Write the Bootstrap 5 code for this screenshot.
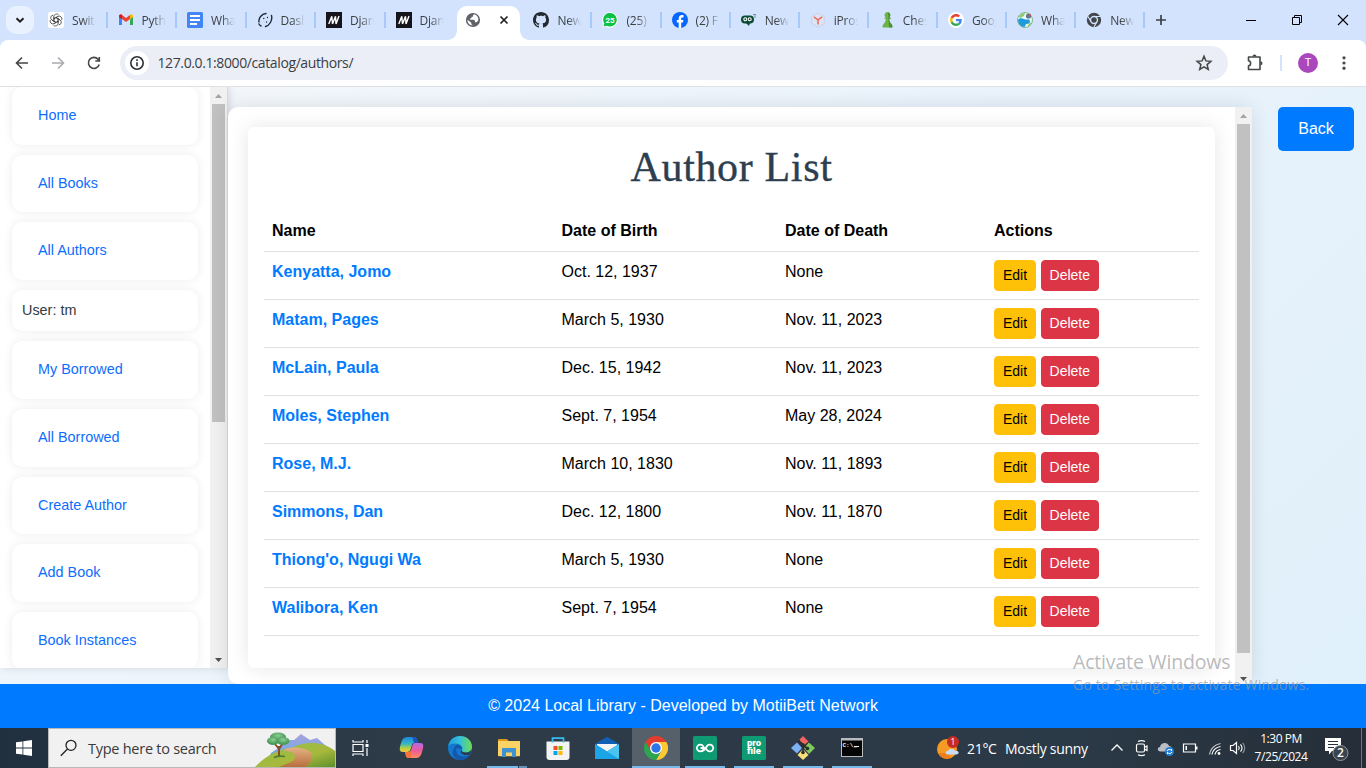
<!DOCTYPE html>
<html lang="en">
<head>
<meta charset="utf-8">
<meta name="viewport" content="width=device-width, initial-scale=1">
<title>Local Library - Author List</title>
<link href="https://cdn.jsdelivr.net/npm/bootstrap@5.3.0/dist/css/bootstrap.min.css" rel="stylesheet">
<style>
:root { --ui: "Open Sans", "Noto Sans", sans-serif; --page: "Liberation Sans", Arial, sans-serif; }
body { width: 1366px; height: 768px; overflow: hidden; font-family: var(--page); color: #000; }
svg { display: block; flex: none; }

/* browser tab strip */
.tabstrip { height: 40px; background: #d3e3fd; font-family: var(--ui); font-size: 12px; color: #3c4043; }
.tab-search { width: 28px; height: 28px; margin: 6px 5px 6px 6px; border-radius: 10px; background: #e9f0fe; }
.btab { width: 69.5px; padding-left: 9px; border-right: 0; }
.btab.later { width: 69.1px; }
.btab .label { width: 24px; margin: 2px 0 0 8px; letter-spacing: -.2px; overflow: hidden; white-space: nowrap; line-height: 16px;
  -webkit-mask-image: linear-gradient(90deg, #000 45%, transparent 100%); mask-image: linear-gradient(90deg, #000 45%, transparent 100%); }
.btab::after { content: ""; width: 2px; height: 16px; margin-left: auto; margin-right: 1px; background: #a8c7fa; }
.btab.bare::after { display: none; }
.btab-active { width: 63px; height: 34px; margin: 6px 4.4px 0 1px; padding-left: 8px; background: #fff; border-radius: 10px 10px 0 0; position: relative; }
.btab-active::before, .btab-active::after { content: ""; position: absolute; bottom: 0; width: 9px; height: 9px; }
.btab-active::before { left: -9px; background: radial-gradient(circle at 0 0, transparent 8.5px, #fff 9px); }
.btab-active::after { right: -9px; background: radial-gradient(circle at 100% 0, transparent 8.5px, #fff 9px); }

/* address bar */
.toolbar-wrap { height: 47px; background: #d3e3fd; }
.toolbar { height: 47px; background: #fff; border-radius: 8px 8px 0 0; border-bottom: 1px solid #dfe1e2; padding-left: 12px; }
.omnibox { width: 1108px; height: 34px; margin-left: 16px; background: #ebeef7; border-radius: 17px; padding: 0 15px 0 5px; font-family: var(--ui); font-size: 14px; color: #3b3e44; letter-spacing: -.39px; }
.omnibox .url { margin-top: -2px; }
.site-info { width: 24px; height: 24px; border-radius: 50%; background: #fff; margin-right: 8.5px; }
.avatar { width: 20px; height: 20px; border-radius: 50%; background: #ab47bc; color: #fff; font: 11px/20px Roboto, sans-serif; text-align: center; }

/* page */
.page { height: 597px; background: linear-gradient(135deg, #f6f8fb 0%, #eaf3fc 50%, #e0f0fa 100%); overflow: hidden; }
.sidebar { width: 228px; height: 581px; background: #fff; border-right: 1px solid #d8d9da; box-shadow: 2px 0 8px rgba(0,0,0,.12); overflow: hidden; }
.side-list { width: 186px; margin: 0 12px; display: flex; flex-direction: column; gap: 10px; }
.side-item { font-size: 14.4px; line-height: 21.6px; padding: 18px 26px; border-radius: 10px; background: #fff; box-shadow: 0 0 10px rgba(0,0,0,.08); color: #0d6efd; text-decoration: none; flex: none; }
.side-item.user { padding: 10px; color: #343a40; }
.sbar { width: 17px; background: #f1f1f1; flex: none; display: flex; flex-direction: column; align-items: center; }
.sbar .thumb { width: 13px; background: #c1c1c1; }
.sbar .btn-cell { height: 17px; width: 17px; display: grid; place-items: center; }
.main-pane { width: 1024px; height: 577px; margin-top: 20px; background: #fff; border-radius: 10px; box-shadow: 0 0 20px rgba(0,0,0,.11); }
.author-card { width: 967px; height: 541px; margin: 20px 20px 0; padding: 16px; border-radius: 6px; background: #fff; box-shadow: 0 0 20px rgba(0,0,0,.1); flex: none; }
.title { font-family: "Liberation Serif", Georgia, serif; font-size: 42px; line-height: 48px; height: 48px; letter-spacing: .65px; color: #2c3e50; -webkit-text-stroke: .35px #2c3e50; margin: 0 0 20px; text-align: center; }
.authors { table-layout: fixed; width: 935px; --bs-table-color: #000; color: #000; margin: 0; }
.authors a.who { color: #007bff; font-weight: 700; text-decoration: none; }
.authors .btn { border-radius: 4px; }
.btn-back { background: #007bff; color: #fff; border: 0; border-radius: 5px; padding: 10px 20px; width: 76px; height: 44px; margin: 20px 0 0 26px; white-space: nowrap; }
.foot { height: 44px; background: #007bff; color: #fff; line-height: 43px; text-align: center; }
.watermark { position: absolute; left: 1073px; top: 649px; font-family: var(--ui); color: rgba(150,152,155,.68); white-space: nowrap; line-height: 26px; }
.watermark .wm1 { font-size: 19.5px; letter-spacing: -.17px; }
.watermark .wm2 { font-size: 14px; line-height: 20px; letter-spacing: .2px; }

/* taskbar */
.taskbar { height: 40px; background: linear-gradient(90deg, #20303e 0, #2e3b49 30%, #2d3947 60%, #2b3a47 78%, #252e38 100%); font-family: var(--ui); color: #fff; }
.search { width: 288px; height: 40px; background: #f1f1f1; border: 1px solid #b9b9b9; color: #3a3a3a; font-size: 14.5px; letter-spacing: -.26px; padding-left: 11px; }
.app { width: 49px; height: 40px; display: flex; flex-direction: column; align-items: center; padding-top: 8px; }
.app .run { width: 40px; height: 2px; background: #76b9ed; margin-top: 6px; }
.app.on { background: #56606b; width: 48px; }
.app.on .run { width: 48px; }
.weather { font-size: 14px; letter-spacing: -.3px; white-space: nowrap; }
.clock { width: 62px; font-size: 12px; line-height: 18px; text-align: center; letter-spacing: -.45px; white-space: nowrap; }
.peek { width: 1px; height: 40px; background: #6d757e; }
</style>
</head>
<body>
<div class="tabstrip d-flex">
  <div class="tab-search d-grid" style="place-items:center"><svg width="12" height="12" viewBox="0 0 12 12"><path d="M2.500 4.200 6 7.600 9.500 4.200" fill="none" stroke="#1f1f1f" stroke-width="2"/></svg></div>
  <div class="btab d-flex align-items-center"><svg width="16" height="16" viewBox="0 0 16 16"><rect width="16" height="16" rx="2" fill="#fff"/><g fill="none" stroke="#3a3a3a" stroke-width=".75"><path id="k" d="M5.900 9.200V4.500a2.700 2.700 0 0 1 4.900-1.400M5.900 6.800 9.800 4.500"/><use href="#k" transform="rotate(60 8 8)"/><use href="#k" transform="rotate(120 8 8)"/><use href="#k" transform="rotate(180 8 8)"/><use href="#k" transform="rotate(240 8 8)"/><use href="#k" transform="rotate(300 8 8)"/></g></svg><span class="label">Switch</span></div>
  <div class="btab d-flex align-items-center"><svg width="16" height="16" viewBox="0 0 16 16"><path d="M1 4v9h3V7.200z" fill="#4285f4"/><path d="M15 4v9h-3V7.200z" fill="#34a853"/><path d="M1 4.500V4c0-1.500 1.700-2 2.700-1.200L8 6l4.300-3.200L12 7 8 10 1 4.800z" fill="#ea4335"/><path d="M12 3c1.300-1 3-.3 3 1.200v.8l-3 2.300z" fill="#fbbc04"/><path d="M1 4.200C1 2.700 2.800 2 4 3v4.200L1 5z" fill="#c5221f"/></svg><span class="label">Python</span></div>
  <div class="btab d-flex align-items-center"><svg width="16" height="16" viewBox="0 0 16 16"><rect width="16" height="16" rx="1.500" fill="#4285f4"/><path d="M3 4h10M3 8h10M3 12h7" stroke="#fff" stroke-width="1.800"/></svg><span class="label">What</span></div>
  <div class="btab d-flex align-items-center"><svg width="16" height="16" viewBox="0 0 16 16"><g fill="none" stroke="#202b38" stroke-width="1.400" stroke-linecap="round"><path d="M2 10C1.300 6 4.500 2 9 1.500M4 14c-1-.5-1.600-1.200-2-2M14.500 3.500c1.200 5-2 10-6 11"/></g><circle cx="6.800" cy="6.500" r=".7" fill="#202b38"/><circle cx="10.500" cy="5.500" r=".7" fill="#202b38"/><circle cx="9.500" cy="10" r=".7" fill="#202b38"/></svg><span class="label">Dash</span></div>
  <div class="btab d-flex align-items-center"><svg width="16" height="16" viewBox="0 0 16 16"><rect width="16" height="16" fill="#15141a"/><path d="M2.800 12 5.800 4.200M5.800 4.200 6.500 12M6.500 12 9.500 4.200M9.500 4.200 10 12M10 12 13 4" fill="none" stroke="#fff" stroke-width="1.400"/></svg><span class="label">Django</span></div>
  <div class="btab bare d-flex align-items-center"><svg width="16" height="16" viewBox="0 0 16 16"><rect width="16" height="16" fill="#15141a"/><path d="M2.800 12 5.800 4.200M5.800 4.200 6.500 12M6.500 12 9.500 4.200M9.500 4.200 10 12M10 12 13 4" fill="none" stroke="#fff" stroke-width="1.400"/></svg><span class="label">Django</span></div>
  <div class="btab-active d-flex align-items-center"><svg style="margin-top:-6px" width="16" height="16" viewBox="0 0 16 16"><circle cx="8" cy="8" r="7.100" fill="#5f6368"/><path d="M9.500 2.300 8 3.200v1.600H6.500v1.500L5 6.500v1.300h4l1 1.200v1.300h1.600l1.700-1.800c.4-2.600-1-5.100-3.800-6.200zM2.500 7.800l3.800 3v1.500l1.200.7v.5C4.600 13.300 2.400 11 2.500 7.800z" fill="#fff"/></svg><svg style="margin:-6px 0 0 15px" width="16" height="16" viewBox="0 0 16 16"><path d="m4.500 4.500 7 7m0-7-7 7" stroke="#1f1f1f" stroke-width="1.700"/></svg></div>
  <div class="btab later d-flex align-items-center"><svg width="16" height="16" viewBox="0 0 16 16"><path fill="#24292f" d="M8 0C3.580 0 0 3.580 0 8c0 3.540 2.290 6.530 5.470 7.590.4.070.55-.17.55-.38 0-.19-.01-.82-.01-1.490-2.010.37-2.530-.49-2.690-.94-.09-.23-.48-.94-.82-1.130-.28-.15-.68-.52-.01-.53.63-.01 1.080.58 1.230.82.72 1.210 1.870.87 2.330.66.070-.52.280-.87.510-1.070-1.780-.2-3.640-.89-3.640-3.950 0-.87.310-1.590.82-2.150-.08-.2-.36-1.020.08-2.120 0 0 .67-.21 2.200.82.640-.18 1.320-.27 2-.27s1.360.09 2 .27c1.530-1.040 2.200-.82 2.200-.82.44 1.100.16 1.920.08 2.120.51.560.82 1.270.82 2.150 0 3.070-1.870 3.750-3.650 3.950.29.250.54.730.54 1.480 0 1.070-.01 1.930-.01 2.200 0 .21.150.46.55.38A8.010 8.010 0 0 0 16 8c0-4.420-3.580-8-8-8"/></svg><span class="label">New</span></div>
  <div class="btab later d-flex align-items-center"><svg width="16" height="16" viewBox="0 0 16 16"><path d="M.3 15.700 1.300 12A7.800 7.800 0 1 1 4.200 14.800z" fill="#fff"/><path d="M1.500 14.500 2.300 11.500A6.800 6.800 0 1 1 4.700 13.700z" fill="#0cc143"/><text x="8" y="10.800" text-anchor="middle" font-family="Roboto" font-weight="700" font-size="8" fill="#fff">25</text></svg><span class="label">(25)</span></div>
  <div class="btab later d-flex align-items-center"><svg width="16" height="16" viewBox="0 0 16 16"><circle cx="8" cy="8" r="8" fill="#0866ff"/><path d="M6.700 16v-5.500H4.800V8h1.900V6.800C6.700 4.200 8 3 10 3c.6 0 1.200.1 1.500.2v2.200h-1c-1.100 0-1.300.5-1.300 1.300V8h2.200l-.4 2.500H9.200V16z" fill="#fff"/></svg><span class="label">(2) F</span></div>
  <div class="btab later d-flex align-items-center"><svg width="16" height="16" viewBox="0 0 16 16"><rect x="0" y="3.500" width="13" height="8" rx="4" fill="#0b4a35"/><path d="M5 11h4l-1 3z" fill="#0b4a35"/><g fill="none" stroke="#fff" stroke-width="1.100"><circle cx="4.300" cy="7.300" r="1.500"/><circle cx="8.700" cy="7.300" r="1.500"/></g><path d="M12 2.500h3M14 2v4" stroke="#6b9a8c" stroke-width="1"/></svg><span class="label">New</span></div>
  <div class="btab later d-flex align-items-center"><svg width="16" height="16" viewBox="0 0 16 16"><path d="M8 .8 14.200 4.400v7.200L8 15.200 1.800 11.600V4.400z" fill="#dce4f6" stroke="#c9cfe8"/><path d="m3.800 4.800 4.200 3v4.700M12.200 4.800 8 7.800" fill="none" stroke="#f46c5b" stroke-width="1.600"/></svg><span class="label">iPros</span></div>
  <div class="btab later d-flex align-items-center"><svg width="16" height="16" viewBox="0 0 16 16"><path d="M8.500 0a3 3 0 0 1 2 5.200L12 6.500l-1.800.5c.2 2.500 1 4 2.500 5.200.7.700.9 2 .6 3.300H3.700c-.3-1.300-.1-2.600.6-3.300C5.800 11 6.600 9.500 6.800 7L5 6.500l1.500-1.300A3 3 0 0 1 8.500 0" fill="#6db347"/><path d="M9 .3a3 3 0 0 1 1.500 4.900L12 6.500l-1.800.5c.2 2.500 1 4 2.500 5.200.7.700.9 2 .6 3.300H10z" fill="#4b9436"/></svg><span class="label">Chess</span></div>
  <div class="btab later d-flex align-items-center"><svg width="16" height="16" viewBox="0 0 16 16"><circle cx="8" cy="8" r="8" fill="#fff"/><g transform="translate(2 2) scale(.25)"><path fill="#EA4335" d="M24 9.500c3.540 0 6.710 1.220 9.210 3.600l6.850-6.850C35.900 2.380 30.470 0 24 0 14.620 0 6.510 5.380 2.560 13.220l7.980 6.190C12.430 13.720 17.740 9.500 24 9.500z"/><path fill="#4285F4" d="M46.980 24.550c0-1.570-.15-3.090-.38-4.550H24v9.020h12.940c-.58 2.960-2.260 5.480-4.780 7.180l7.730 6c4.510-4.180 7.090-10.360 7.090-17.650z"/><path fill="#FBBC05" d="M10.530 28.590c-.48-1.450-.76-2.990-.76-4.590s.27-3.140.76-4.590l-7.980-6.190C.92 16.460 0 20.120 0 24c0 3.880.92 7.540 2.560 10.780l7.970-6.190z"/><path fill="#34A853" d="M24 48c6.480 0 11.930-2.130 15.890-5.810l-7.730-6c-2.150 1.450-4.920 2.300-8.160 2.300-6.260 0-11.570-4.220-13.470-9.910l-7.980 6.190C6.510 42.620 14.620 48 24 48z"/></g></svg><span class="label">Goog</span></div>
  <div class="btab later d-flex align-items-center"><svg width="16" height="16" viewBox="0 0 16 16"><circle cx="8" cy="8" r="7.500" fill="#eef8f6" stroke="#7fb98a"/><path d="M1 8c1-2 3.500-2.500 6-1 1.500 1 5 0 5.500 1S14 12 9.500 12c-1 0-1 2-2 3C4 15 1 12 1 8" fill="#1f9bd9"/><path d="M2 4.500C3.500 2 6 1 8 1l-1 3-4 2z" fill="#8cc96c"/><path d="M10.500 14.500c2-.5 3.500-2 4-4l-2.500 1z" fill="#8cc96c"/><circle cx="11.500" cy="4" r="2.600" fill="#66788f"/><circle cx="13" cy="3" r="1" fill="#e0523f"/></svg><span class="label">What</span></div>
  <div class="btab later d-flex align-items-center"><svg width="16" height="16" viewBox="0 0 24 24"><circle cx="12" cy="12" r="10.800" fill="#43474c"/><circle cx="12" cy="12" r="5.200" fill="none" stroke="#d3e3fd" stroke-width="2"/><path d="M12 6.800h10M7.500 14.600 2.500 6M16.500 14.600 11.700 23" stroke="#d3e3fd" stroke-width="1.600"/></svg><span class="label">New</span></div>
  <svg style="margin:12px 0 0 6.500px" width="16" height="16" viewBox="0 0 16 16"><path d="M8 3v10M3 8h10" stroke="#3c4043" stroke-width="1.700"/></svg>
  <svg style="margin:14px 0 0 76px" width="12" height="12" viewBox="0 0 12 12"><path d="M1 6.500h10" stroke="#000"/></svg>
  <svg style="margin:14px 0 0 34px" width="12" height="12" viewBox="0 0 12 12"><path d="M1.500 3.500h7v7h-7zM3.500 3.500v-2h7v7h-2" fill="none" stroke="#000"/></svg>
  <svg style="margin:14px 0 0 34px" width="12" height="12" viewBox="0 0 12 12"><path d="m1 1 10 10M11 1 1 11" stroke="#000" stroke-width="1.100"/></svg>
</div>

<div class="toolbar-wrap"><div class="toolbar d-flex align-items-center">
  <svg width="20" height="20" viewBox="0 0 20 20"><path d="M16 10H5M10 4.500 4.500 10l5.500 5.500" fill="none" stroke="#444746" stroke-width="1.600"/></svg>
  <svg style="margin-left:16px" width="20" height="20" viewBox="0 0 20 20"><path d="M4 10h11M10 4.500l5.500 5.500-5.500 5.500" fill="none" stroke="#a9abae" stroke-width="1.600"/></svg>
  <svg style="margin-left:16px" width="20" height="20" viewBox="0 0 20 20"><path d="M15.200 11.500A5.500 5.500 0 1 1 14 6.200l1.200 1.300M15.300 4v4h-4" fill="none" stroke="#444746" stroke-width="1.600"/></svg>
  <div class="omnibox d-flex align-items-center">
    <span class="site-info d-grid" style="place-items:center"><svg width="16" height="16" viewBox="0 0 16 16"><circle cx="8" cy="8" r="6.200" fill="none" stroke="#2d3033" stroke-width="1.600"/><path d="M8 7.300v4M8 4.300v1.600" stroke="#2d3033" stroke-width="1.600"/></svg></span>
    <span class="url">127.0.0.1:8000/catalog/authors/</span>
    <svg class="ms-auto" width="18" height="18" viewBox="0 0 18 18"><path d="m9 2.300 1.900 4.600 5 .4-3.800 3.300 1.200 4.900L9 12.900l-4.300 2.600 1.200-4.900L2.100 7.300l5-.4z" fill="none" stroke="#444746" stroke-width="1.500"/></svg>
  </div>
  <svg style="margin-left:17px" width="20" height="20" viewBox="0 0 20 20"><path d="M3.500 4H15v12.500H3.500v-3.700c2.800-.2 2.800-4.900 0-5.100z" fill="none" stroke="#444746" stroke-width="1.600" stroke-linejoin="round"/><path d="M7.500 3.500a2 2 0 0 1 4 0zM15.500 8.200a2 2 0 0 1 0 4z" fill="#444746"/></svg>
  <span style="width:2px;height:16px;margin-left:15px;background:#d3e3fd"></span>
  <span class="avatar" style="margin-left:16px">T</span>
  <svg style="margin-left:16px" width="20" height="20" viewBox="0 0 20 20"><g fill="#444746"><circle cx="10" cy="4.800" r="1.600"/><circle cx="10" cy="10" r="1.600"/><circle cx="10" cy="15.200" r="1.600"/></g></svg>
</div></div>

<div class="page d-flex align-items-start">
  <nav class="sidebar d-flex">
    <div class="side-list">
      <a class="side-item" href="#">Home</a>
      <a class="side-item" href="#">All Books</a>
      <a class="side-item" href="#">All Authors</a>
      <div class="side-item user">User: tm</div>
      <a class="side-item" href="#">My Borrowed</a>
      <a class="side-item" href="#">All Borrowed</a>
      <a class="side-item" href="#">Create Author</a>
      <a class="side-item" href="#">Add Book</a>
      <a class="side-item" href="#">Book Instances</a>
    </div>
    <div class="sbar">
      <span class="btn-cell"><svg width="7" height="4" viewBox="0 0 7 4"><path d="M0 4 3.500 0 7 4z" fill="#a3a3a3"/></svg></span>
      <span class="thumb" style="height:318px"></span>
      <span class="btn-cell mt-auto"><svg width="7" height="4" viewBox="0 0 7 4"><path d="M0 0 3.500 4 7 0z" fill="#505050"/></svg></span>
    </div>
  </nav>

  <main class="main-pane d-flex">
    <div class="author-card">
      <h1 class="title fw-normal">Author List</h1>
      <table class="table authors">
        <colgroup><col style="width:289.500px"><col style="width:223.500px"><col style="width:209px"><col></colgroup>
        <thead><tr><th>Name</th><th>Date of Birth</th><th>Date of Death</th><th>Actions</th></tr></thead>
        <tbody>
          <tr><td><a class="who" href="#">Kenyatta, Jomo</a></td><td>Oct. 12, 1937</td><td>None</td><td><a class="btn btn-warning btn-sm" href="#">Edit</a> <a class="btn btn-danger btn-sm" href="#">Delete</a></td></tr>
          <tr><td><a class="who" href="#">Matam, Pages</a></td><td>March 5, 1930</td><td>Nov. 11, 2023</td><td><a class="btn btn-warning btn-sm" href="#">Edit</a> <a class="btn btn-danger btn-sm" href="#">Delete</a></td></tr>
          <tr><td><a class="who" href="#">McLain, Paula</a></td><td>Dec. 15, 1942</td><td>Nov. 11, 2023</td><td><a class="btn btn-warning btn-sm" href="#">Edit</a> <a class="btn btn-danger btn-sm" href="#">Delete</a></td></tr>
          <tr><td><a class="who" href="#">Moles, Stephen</a></td><td>Sept. 7, 1954</td><td>May 28, 2024</td><td><a class="btn btn-warning btn-sm" href="#">Edit</a> <a class="btn btn-danger btn-sm" href="#">Delete</a></td></tr>
          <tr><td><a class="who" href="#">Rose, M.J.</a></td><td>March 10, 1830</td><td>Nov. 11, 1893</td><td><a class="btn btn-warning btn-sm" href="#">Edit</a> <a class="btn btn-danger btn-sm" href="#">Delete</a></td></tr>
          <tr><td><a class="who" href="#">Simmons, Dan</a></td><td>Dec. 12, 1800</td><td>Nov. 11, 1870</td><td><a class="btn btn-warning btn-sm" href="#">Edit</a> <a class="btn btn-danger btn-sm" href="#">Delete</a></td></tr>
          <tr><td><a class="who" href="#">Thiong'o, Ngugi Wa</a></td><td>March 5, 1930</td><td>None</td><td><a class="btn btn-warning btn-sm" href="#">Edit</a> <a class="btn btn-danger btn-sm" href="#">Delete</a></td></tr>
          <tr><td><a class="who" href="#">Walibora, Ken</a></td><td>Sept. 7, 1954</td><td>None</td><td><a class="btn btn-warning btn-sm" href="#">Edit</a> <a class="btn btn-danger btn-sm" href="#">Delete</a></td></tr>
        </tbody>
      </table>
    </div>
    <div class="sbar">
      <span class="btn-cell"><svg width="7" height="4" viewBox="0 0 7 4"><path d="M0 4 3.500 0 7 4z" fill="#a3a3a3"/></svg></span>
      <span class="thumb" style="height:529px"></span>
      <span class="btn-cell mt-auto" style="height:11px"><svg width="7" height="4" viewBox="0 0 7 4"><path d="M0 0 3.500 4 7 0z" fill="#505050"/></svg></span>
    </div>
  </main>
  <a class="btn btn-back" href="#">Back</a>
</div>
<footer class="foot">© 2024 Local Library - Developed by MotiiBett Network</footer>

<div class="taskbar d-flex align-items-center">
  <svg style="margin:0 16px" width="16" height="16" viewBox="0 0 16 16"><path d="M0 2.300 6.500 1.400v6.200H0zM7.300 1.200 16 0v7.600H7.300zM0 8.400h6.500v6.200L0 13.700zM7.300 8.400H16V16l-8.700-1.200z" fill="#fff"/></svg>
  <div class="search d-flex align-items-center">
    <svg width="18" height="18" viewBox="0 0 18 18"><circle cx="11" cy="6.300" r="5" fill="none" stroke="#222" stroke-width="1.300"/><path d="M7.500 10 .8 16.700" stroke="#222" stroke-width="1.300"/></svg>
    <span style="margin:1px 0 0 10px;white-space:nowrap">Type here to search</span>
    <svg class="ms-auto" width="80" height="38" viewBox="0 0 80 38">
      <defs>
        <linearGradient id="mt" x2="0" y2="1"><stop stop-color="#a9a1dc"/><stop offset=".6" stop-color="#7fa9e4"/><stop offset="1" stop-color="#5a9be0"/></linearGradient>
        <linearGradient id="hl" x2="1" y2="1"><stop stop-color="#8fc04e"/><stop offset=".6" stop-color="#a8b83c"/><stop offset="1" stop-color="#5b8f2b"/></linearGradient>
        <linearGradient id="rd" x2="0" y2="1"><stop stop-color="#e2b183"/><stop offset="1" stop-color="#b86f3c"/></linearGradient>
        <radialGradient id="tr" cy=".35"><stop stop-color="#8ccf95"/><stop offset="1" stop-color="#4a9a58"/></radialGradient>
      </defs>
      <path d="M16 24 35 11l4 0 7-6 9 6 7-2 8 7 9 8v5H14z" fill="url(#mt)"/>
      <path d="M0 38C10 27 24 20 36 19c14-7 32-7 44 3v16z" fill="url(#hl)"/>
      <path d="M30 20c14-4 27 1 27 7 0 5-3 8-6 11H24c8-3 17-6 16-11-1-4-7-5-11-5z" fill="url(#rd)"/>
      <path d="m24 28 0-11M24 20l-4-5m4 5 4-6" stroke="#8a4a2c" stroke-width="2" fill="none"/><path d="M19 28.500q5-2 11-1" stroke="#4f7d2c" stroke-width="1.600" fill="none"/>
      <g fill="url(#tr)"><ellipse cx="23" cy="8" rx="8" ry="4.500"/><ellipse cx="18" cy="12" rx="6" ry="4"/><ellipse cx="28" cy="12" rx="6.500" ry="4"/></g>
    </svg>
  </div>
  <div class="app"><svg width="24" height="24" viewBox="0 0 24 24"><g fill="none" stroke="#fff" stroke-width="1.200"><path d="M4 8.500h10v7H4zM4 4v2h10V4M4 20v-2h10v2"/><path d="M18 4v3M18 12v8"/></g><rect x="16.500" y="8" width="3" height="3" fill="#fff"/></svg></div>
  <div class="app" style="padding-left:3px"><svg width="25" height="24" viewBox="0 0 25 24"><defs><linearGradient id="c1" x2="0" y2="1"><stop stop-color="#1b87e0"/><stop offset=".45" stop-color="#35b6c4"/><stop offset=".75" stop-color="#b9d13f"/><stop offset="1" stop-color="#f2c640"/></linearGradient><linearGradient id="c2" x2="0" y2="1"><stop stop-color="#b36be8"/><stop offset=".5" stop-color="#ee5b9b"/><stop offset="1" stop-color="#fb8b5a"/></linearGradient></defs><path d="M8 1h7c3 0 3 3 4 6h-4c-2 0-2 2-3 5-1 3-2 4-4 4H4c-5 0-3-5-2-9C3 3 5 1 8 1z" fill="url(#c1)"/><path d="M17 22h-7c-3 0-3-2-4-6h3c3 0 3-2 4-5 1-3 1-4 3-4h5c5 0 3 5 2 9-1 4-3 6-6 6z" fill="url(#c2)"/><path d="M6 16h3c2 0 3-1 3.500-3 .5 3-.5 5-.5 9h-2c-3 0-3-2-4-6z" fill="#f4733f"/><path d="M13 1h2c3 0 3 3 4 6h-4c-1-3-1-5-2-6z" fill="#1c54b8"/></svg></div>
  <div class="app" style="padding-left:2px"><svg width="24" height="24" viewBox="0 0 24 24"><defs><linearGradient id="e1" x2="1" y2="0"><stop stop-color="#1d9be0"/><stop offset=".5" stop-color="#35c1d8"/><stop offset="1" stop-color="#6edc50"/></linearGradient></defs><circle cx="12" cy="12" r="12" fill="#1378cf"/><path d="M.2 10C1.500 3.500 6.500 0 12 0c7 0 12 5 12 10.500 0 4-3 6-6.500 6-3 0-4-1.200-3.500-2.200C16 11 12 7.500 7.500 7.500 4 7.500 1.500 8.500.2 10z" fill="url(#e1)"/><path d="M8.500 12c-1.500 5 2.500 8.500 7 8.500 3 0 5-1 6.500-2-1.500 3-5 5.500-10 5.500C6 23.500 4 18 5 14c.6-2.500 2.500-4.500 4.500-5.200 2.500.2 4.500 2.200 4.300 4.200z" fill="#1557a8"/><path d="M14 13.500c-.8 1.600.4 3 3.500 3 2.600 0 4.600-1 5.700-2.600-.2 1.700-.6 3-1.300 4.300-3 2-8.400.5-9.400-2.200z" fill="#2c3a48"/></svg></div>
  <div class="app" style="padding-left:2px"><svg width="24" height="24" viewBox="0 0 24 24"><path d="M1 4c0-.6.500-1 1-1h8l2 2.500H1z" fill="#d99a1b"/><path d="M1 5h22v14.500c0 .5-.3.800-.8.800H1.800a.8.800 0 0 1-.8-.8z" fill="#fbd365"/><path d="M5 13c0-.6.400-1 1-1h12c.6 0 1 .4 1 1v8h-4v-4.500H9V21H5z" fill="#3f92d2"/></svg><span class="d-flex align-self-start" style="gap:1px;margin-left:2px"><span class="run" style="width:31px"></span><span class="run" style="width:8px;opacity:.7"></span></span></div>
  <div class="app" style="padding-left:2px"><svg width="24" height="24" viewBox="0 0 24 24"><path d="M.5 5.500h23V21c0 2-1 3-3 3h-17c-2 0-3-1-3-3z" fill="#f3f3f3"/><path d="M6.500 6.500V2.200h11v4.300" fill="none" stroke="#36bdec" stroke-width="1.700"/><path d="M7.500 10h4v4h-4z" fill="#f25022"/><path d="M12.500 10h4v4h-4z" fill="#7fba00"/><path d="M7.500 15h4v4h-4z" fill="#00a4ef"/><path d="M12.500 15h4v4h-4z" fill="#ffb900"/></svg></div>
  <div class="app" style="padding-left:2px"><svg width="24" height="24" viewBox="0 0 24 24"><path d="M0 8 12 .8 24 8v3H0z" fill="#0f5fb5"/><path d="M2 8h20v4l-10 6-10-6z" fill="#f4f4f4"/><path d="M0 8 24 23H0z" fill="#1ca4e8"/><path d="M24 8 0 23h24z" fill="#3bb9f0"/><path d="M0 8l12 7.500L24 8v15H0z" fill="#1ca4e8"/><path d="M24 8v15L12 15.500z" fill="#4cc4f2"/></svg></div>
  <div class="app on" style="margin-left:2px"><svg width="24" height="24" viewBox="0 0 24 24"><path d="M1.600 6A12 12 0 0 1 22.400 6H12L6.800 15z" fill="#e33b2e"/><path d="M22.400 6A12 12 0 0 1 12 24l5.200-9L12 6z" fill="#fcc934"/><path d="M12 24A12 12 0 0 1 1.600 6l5.200 9h10.400z" fill="#2da44e"/><circle cx="12" cy="12" r="6" fill="#fff"/><circle cx="12" cy="12" r="4.700" fill="#2f73e8"/></svg><span class="run"></span></div>
  <div class="app"><svg width="24" height="24" viewBox="0 0 24 24"><rect width="24" height="24" rx="1.500" fill="#0e9b74"/><g fill="none" stroke="#fff" stroke-width="1.800"><circle cx="7.300" cy="12" r="3.400"/><path d="M7.500 12h3.300c0 2-.8 3-2 3.500M10.800 14.500l3.200-4.400a3.400 3.400 0 1 1 0 3.900l-1.300-1.800"/></g></svg><span class="run"></span></div>
  <div class="app"><svg width="24" height="24" viewBox="0 0 24 24"><rect width="24" height="24" rx="1.500" fill="#0e9b74"/><g font-family="Roboto" font-weight="900" font-size="9.500" fill="#fff" text-anchor="middle"><text x="12" y="9.800">pro</text><text x="12" y="18">file</text></g></svg><span class="run"></span></div>
  <div class="app"><svg width="24" height="24" viewBox="0 0 24 24"><path d="M8.500 3.500 12 0l5.500 5.500L12 10z" fill="#f0635f"/><path d="M6 6.500 11 12l-5 5.500L0 12z" fill="#7eb0f5"/><path d="M18 6.500 24 12l-6 6-5-6z" fill="#7fc95c"/><path d="M12 13l5.500 6L12 24l-5.500-5z" fill="#f8e07a"/><path d="M7.500 5 12 8.500V17M12 9l4.500 3.500" stroke="#2b2b2b" stroke-width="1.600" fill="none"/><g fill="#2b2b2b"><circle cx="12" cy="9" r="1.800"/><circle cx="12" cy="16.500" r="1.800"/><circle cx="16.500" cy="12.500" r="1.800"/></g></svg><span class="run"></span></div>
  <div class="app"><svg width="24" height="24" viewBox="0 0 24 24"><rect x="1" y="2" width="22" height="19" fill="#b9bcbf"/><rect x="2" y="4.500" width="20" height="15.500" fill="#050505"/><text x="2.500" y="11" font-family="Liberation Mono" font-size="6" font-weight="700" fill="#eee">C:\_</text><path d="M14 10.500h5" stroke="#eee"/></svg><span class="run"></span></div>

  <div class="d-flex align-items-center ms-auto">
    <svg width="24" height="24" viewBox="0 0 24 24"><circle cx="11" cy="13" r="10" fill="#f59b23"/><path d="M2 17a10 10 0 0 0 13 5l-3-5z" fill="#ee7d1e"/><path d="M11.500 18.500c-3-.5-2-4 .5-3.500 1-3 6-3 7 0 4-1 5 3.500 1.500 3.500z" fill="#c9dcf5"/><circle cx="17" cy="6" r="6" fill="#c62b22"/><text x="17" y="9" text-anchor="middle" font-family="Open Sans" font-size="8.500" fill="#fff">1</text></svg>
    <span class="weather" style="margin-left:7px;width:38px">21°C</span><span class="weather" style="width:104px">Mostly sunny</span>
    <svg width="16" height="16" viewBox="0 0 16 16"><path d="m2.500 10.500 5.500-5.500 5.500 5.500" fill="none" stroke="#fff" stroke-width="1.300"/></svg>
    <svg style="margin-left:9px" width="16" height="18" viewBox="0 0 16 18"><g fill="none" stroke="#fff" stroke-width="1.200"><rect x="2.500" y="5" width="8" height="8" rx="1.500"/><path d="M10.500 8.200 13 7v4.500l-2.500-1.200M4 2.500q3.500-1.800 7 0M4 15.700q3.500 1.800 7 0"/></g></svg>
    <svg style="margin-left:7px" width="18" height="18" viewBox="0 0 18 18"><path d="M3.500 12.500C0 12.500 0 8 3 8c.5-5 8-5.500 9-1 3.500 0 4 5.500.5 5.500z" fill="#b9bec4"/><circle cx="12.500" cy="12.500" r="4.500" fill="#1f7fd4"/><path d="M10 12c.6-2 3.500-2 4.500-.3V10M15 13c-.6 2-3.500 2-4.500.3V15" fill="none" stroke="#fff" stroke-width="1"/></svg>
    <svg style="margin-left:7px" width="16" height="16" viewBox="0 0 16 16"><path d="M1.500 4h12v8h-12z" fill="none" stroke="#fff" stroke-width="1.200"/><path d="M14 6.500h1.500v3H14M3.500 6H5v4H3.500z" fill="#fff"/></svg>
    <svg style="margin-left:9px" width="16" height="16" viewBox="0 0 16 16"><g fill="none" stroke="#fff" stroke-width="1.200"><path d="M2.500 14.500C3 9 7.500 4.500 13.500 3.500" opacity=".75"/><path d="M5 14.500c.5-4 4-7.500 8.500-8M8 14.500c.5-2.500 2.500-4.500 5.500-5"/></g><circle cx="12" cy="13.500" r="1.400" fill="#fff"/></svg>
    <svg style="margin-left:6px" width="18" height="16" viewBox="0 0 18 16"><path d="M1.500 5.500h2.500L7.500 2.500v11L4 10.500H1.500z" fill="none" stroke="#fff" stroke-width="1.200"/><path d="M9.500 6q1.500 2 0 4M11.500 4.300q3 3.700 0 7.400" fill="none" stroke="#fff" stroke-width="1.100"/><path d="M13.700 2.800q4 5.200 0 10.400" fill="none" stroke="#8c959e" stroke-width="1.100"/></svg>
    <div class="clock" style="margin-left:3px">1:30 PM<br>7/25/2024</div>
    <svg style="margin-left:12px" width="26" height="26" viewBox="0 0 26 26"><path d="M1 3h16v13H8l-3 3.500V16H1z" fill="#fff"/><path d="M4 6.500h10M4 9.500h10M4 12.500h6" stroke="#26313c" stroke-width="1.100"/><circle cx="16.500" cy="18" r="7.500" fill="#3b434c" stroke="#8f959b"/><text x="16.500" y="22.300" text-anchor="middle" font-family="Open Sans" font-weight="600" font-size="12" fill="#fff">2</text></svg>
    <span class="peek" style="margin:0 4px 0 11px"></span>
  </div>
</div>
<div class="watermark"><div class="wm1">Activate Windows</div><div class="wm2">Go to Settings to activate Windows.</div></div>
<script src="https://cdn.jsdelivr.net/npm/bootstrap@5.3.0/dist/js/bootstrap.bundle.min.js"></script>
</body>
</html>
